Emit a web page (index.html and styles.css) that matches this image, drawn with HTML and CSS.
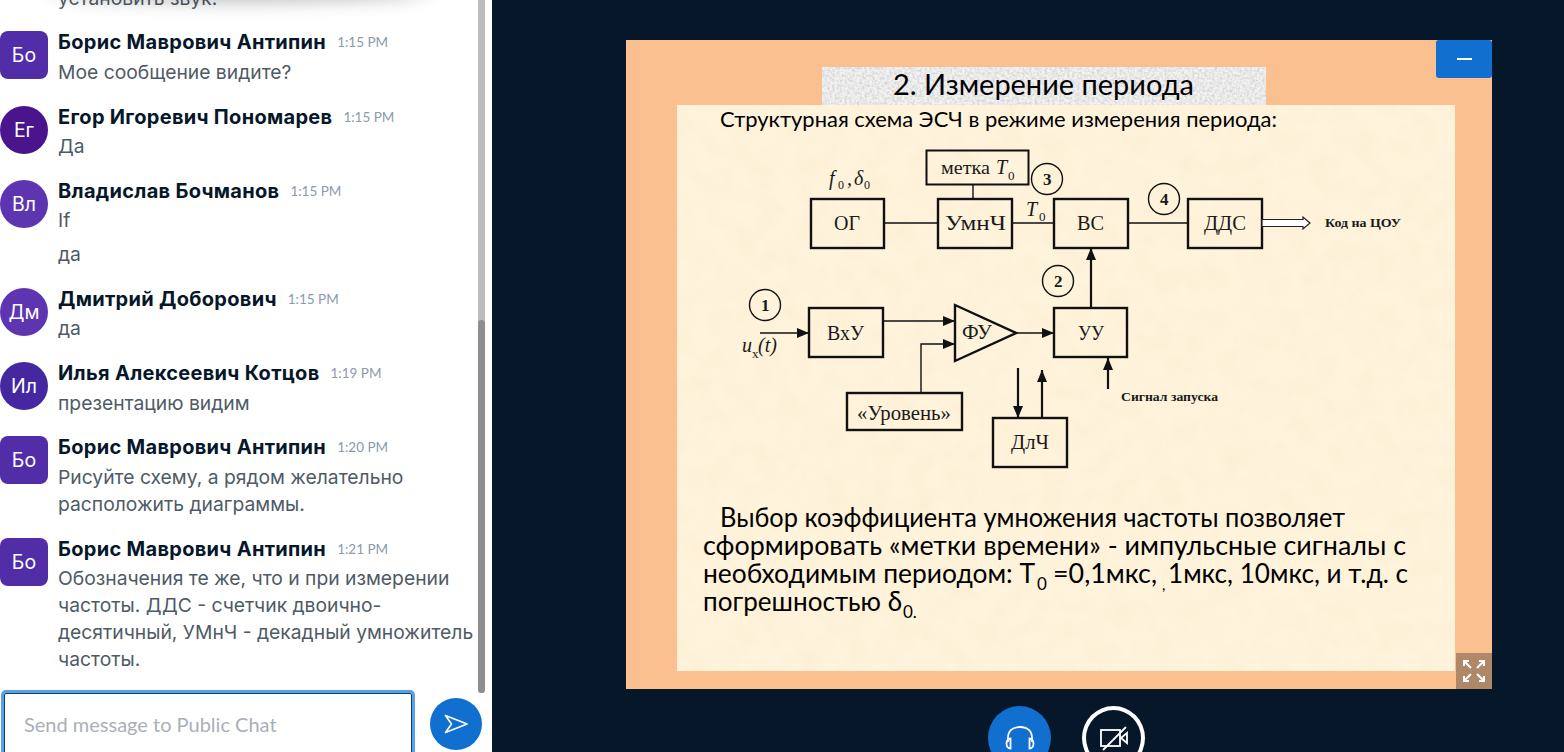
FILE: index.html
```html
<!DOCTYPE html>
<html>
<head>
    <meta charset="utf-8">
    <meta name="viewport" content="width=device-width, initial-scale=1">
    <title>Public Chat</title>
    <link rel="stylesheet" href="styles.css">
</head>
<body>
    <aside class="chat">
        <div class="chat-shadow"></div>
        <div class="scroll-track"><div class="scroll-thumb"></div></div>

        <div class="messages">
            <div class="row">
                <div class="avatar-space"></div>
                <div class="row-body">
                    <p class="msg">установить звук.</p>
                </div>
            </div>
            <div class="row">
                <div class="avatar av-boris">Бо</div>
                <div class="row-body">
                    <div class="row-head"><span class="name">Борис Маврович Антипин</span><span class="time">1:15 PM</span></div>
                    <p class="msg">Мое сообщение видите?</p>
                </div>
            </div>
            <div class="row">
                <div class="avatar round av-1">Ег</div>
                <div class="row-body">
                    <div class="row-head"><span class="name">Егор Игоревич Пономарев</span><span class="time">1:15 PM</span></div>
                    <p class="msg">Да</p>
                </div>
            </div>
            <div class="row">
                <div class="avatar round av-2">Вл</div>
                <div class="row-body">
                    <div class="row-head"><span class="name">Владислав Бочманов</span><span class="time">1:15 PM</span></div>
                    <p class="msg">If</p>
                    <p class="msg next">да</p>
                </div>
            </div>
            <div class="row">
                <div class="avatar round av-2">Дм</div>
                <div class="row-body">
                    <div class="row-head"><span class="name">Дмитрий Доборович</span><span class="time">1:15 PM</span></div>
                    <p class="msg">да</p>
                </div>
            </div>
            <div class="row">
                <div class="avatar round av-3">Ил</div>
                <div class="row-body">
                    <div class="row-head"><span class="name">Илья Алексеевич Котцов</span><span class="time">1:19 PM</span></div>
                    <p class="msg">презентацию видим</p>
                </div>
            </div>
            <div class="row">
                <div class="avatar av-boris">Бо</div>
                <div class="row-body">
                    <div class="row-head"><span class="name">Борис Маврович Антипин</span><span class="time">1:20 PM</span></div>
                    <p class="msg">Рисуйте схему, а рядом желательно расположить диаграммы.</p>
                </div>
            </div>
            <div class="row">
                <div class="avatar av-boris">Бо</div>
                <div class="row-body">
                    <div class="row-head"><span class="name">Борис Маврович Антипин</span><span class="time">1:21 PM</span></div>
                    <p class="msg">Обозначения те же, что и при измерении частоты. ДДС - счетчик двоично-<br>десятичный, УМнЧ - декадный умножитель частоты.</p>
                </div>
            </div>
        </div>

        <div class="composer">
            <div class="composer-input">Send message to Public Chat</div>
            <button class="send-btn" aria-label="Send">
                <svg width="24" height="20" viewBox="0 0 24 20" fill="none" stroke="#fff" stroke-width="1.6" stroke-linejoin="round">
                    <path d="M1.500 1.500 L23 10 L1.500 18.500 L7.500 10 Z"/>
                </svg>
            </button>
        </div>
    </aside>

    <main class="stage">
        <div class="slide">
            <svg class="slide-svg" width="866" height="649" viewBox="626 40 866 649">
                <defs>
                    <filter id="paper" x="0" y="0" width="100%" height="100%">
                        <feTurbulence type="fractalNoise" baseFrequency="0.045" numOctaves="3" seed="7"/>
                        <feColorMatrix type="matrix" values="0 0 0 0 0.95  0 0 0 0 0.84  0 0 0 0 0.62  0.9 0 0 0 -0.32"/>
                    </filter>
                    <filter id="grain" x="0" y="0" width="100%" height="100%">
                        <feTurbulence type="fractalNoise" baseFrequency="0.4" numOctaves="2" seed="3"/>
                        <feColorMatrix type="matrix" values="0 0 0 0 0.5  0 0 0 0 0.5  0 0 0 0 0.5  1.2 0 0 0 -0.42"/>
                    </filter>
                    <marker id="head" viewBox="0 0 12 10" refX="12" refY="5" markerUnits="userSpaceOnUse" markerWidth="12" markerHeight="10" orient="auto">
                        <path d="M0 0 L12 5 L0 10 Z" fill="#111"/>
                    </marker>
                </defs>

                <rect x="626" y="40" width="866" height="649" fill="#fbc08f"/>
                <rect x="822" y="67" width="444" height="38" fill="#f3f3f3"/>
                <rect x="822" y="67" width="444" height="38" filter="url(#grain)"/>
                <rect x="677" y="105" width="778" height="566" fill="#fff3dc"/>
                <rect x="677" y="105" width="778" height="566" filter="url(#paper)"/>

                <g class="slide-text">
                    <text x="893" y="95" font-size="29" textLength="301" lengthAdjust="spacingAndGlyphs">2. Измерение периода</text>
                    <text x="720" y="127" font-size="22" textLength="557" lengthAdjust="spacingAndGlyphs">Структурная схема ЭСЧ в режиме измерения периода:</text>
                    <text x="720" y="527" font-size="27" textLength="625" lengthAdjust="spacingAndGlyphs">Выбор коэффициента умножения  частоты позволяет</text>
                    <text x="703" y="555" font-size="27" textLength="703" lengthAdjust="spacingAndGlyphs">сформировать «метки времени» - импульсные сигналы с</text>
                    <text x="703" y="583" font-size="27" textLength="332" lengthAdjust="spacingAndGlyphs">необходимым периодом: Т</text>
                    <text x="1037" y="590" font-size="17">0</text>
                    <text x="1053" y="583" font-size="27" textLength="104" lengthAdjust="spacingAndGlyphs">=0,1мкс,</text>
                    <text x="1162" y="590" font-size="15">,</text>
                    <text x="1168" y="583" font-size="27" textLength="240" lengthAdjust="spacingAndGlyphs">1мкс, 10мкс, и т.д. с</text>
                    <text x="703" y="611" font-size="27" textLength="199" lengthAdjust="spacingAndGlyphs">погрешностью δ</text>
                    <text x="903" y="618" font-size="17">0.</text>
                </g>

                <g class="boxes" fill="none" stroke="#111" stroke-width="2.4">
                    <rect x="926.5" y="150.5" width="102" height="34" stroke-width="2"/>
                    <rect x="811" y="199" width="73" height="49"/>
                    <rect x="938" y="199" width="74" height="49"/>
                    <rect x="1054" y="199" width="74" height="49"/>
                    <rect x="1188" y="199" width="74" height="49"/>
                    <rect x="809" y="308" width="74" height="49"/>
                    <rect x="1054" y="308" width="73" height="49"/>
                    <rect x="847" y="393" width="115" height="37"/>
                    <rect x="993" y="418" width="74" height="49"/>
                    <path d="M955 305 L1016 333 L955 361 Z"/>
                </g>

                <g fill="none" stroke="#111" stroke-width="1.4">
                    <circle cx="1047" cy="179" r="15.5"/>
                    <circle cx="1058" cy="281" r="15.5"/>
                    <circle cx="765" cy="305" r="15.5"/>
                    <circle cx="1164" cy="199" r="15.5"/>
                    <path d="M973 184 V199 M884 223 H938 M1012 223 H1054 M1128 223 H1188"/>
                    <path d="M760 333 H809" marker-end="url(#head)"/>
                    <path d="M883 321 H955" marker-end="url(#head)"/>
                    <path d="M921 393 V344 H955" marker-end="url(#head)"/>
                    <path d="M1016 333 H1054" marker-end="url(#head)"/>
                </g>
                <g fill="none" stroke="#111" stroke-width="2.2">
                    <path d="M1018 368 V418" marker-end="url(#head)"/>
                    <path d="M1042 418 V370" marker-end="url(#head)"/>
                    <path d="M1108 389 V358" marker-end="url(#head)"/>
                    <path d="M1091 308 V248" marker-end="url(#head)"/>
                </g>
                <path d="M1262 219.500 H1303 V217 L1310 223 L1303 229 V226.500 H1262 Z" fill="#fff" stroke="#222" stroke-width="1.2"/>

                <g class="serif">
                    <text x="834" y="230" font-size="20" textLength="26" lengthAdjust="spacingAndGlyphs">ОГ</text>
                    <text x="945" y="230" font-size="20" textLength="61" lengthAdjust="spacingAndGlyphs">УмнЧ</text>
                    <text x="1077" y="230" font-size="20" textLength="27" lengthAdjust="spacingAndGlyphs">ВС</text>
                    <text x="1204" y="230" font-size="20" textLength="42" lengthAdjust="spacingAndGlyphs">ДДС</text>
                    <text x="827" y="340" font-size="20" textLength="37" lengthAdjust="spacingAndGlyphs">ВхУ</text>
                    <text x="962" y="339" font-size="20" textLength="30" lengthAdjust="spacingAndGlyphs">ФУ</text>
                    <text x="1078" y="340" font-size="20" textLength="26" lengthAdjust="spacingAndGlyphs">УУ</text>
                    <text x="857" y="420" font-size="20" textLength="94" lengthAdjust="spacingAndGlyphs">«Уровень»</text>
                    <text x="1011" y="449" font-size="20" textLength="38" lengthAdjust="spacingAndGlyphs">ДлЧ</text>
                    <text x="941" y="174" font-size="19" textLength="49" lengthAdjust="spacingAndGlyphs">метка</text>
                    <text x="996" y="174" font-size="20" font-style="italic">T</text>
                    <text x="1008" y="180" font-size="13">0</text>
                    <text x="1026" y="216" font-size="20" font-style="italic">T</text>
                    <text x="1039" y="221" font-size="13">0</text>
                    <text x="829" y="185" font-size="20" font-style="italic">f</text>
                    <text x="838" y="189" font-size="12">0</text>
                    <text x="847" y="185" font-size="20" font-style="italic">,</text>
                    <text x="854" y="185" font-size="20" font-style="italic">δ</text>
                    <text x="864" y="189" font-size="12">0</text>
                    <text x="742" y="352" font-size="20" font-style="italic">u</text>
                    <text x="752" y="358" font-size="13">x</text>
                    <text x="758" y="352" font-size="20" font-style="italic">(t)</text>
                    <g font-weight="700">
                        <text x="1043" y="185" font-size="17">3</text>
                        <text x="1054" y="287" font-size="17">2</text>
                        <text x="761" y="311" font-size="17">1</text>
                        <text x="1160" y="205" font-size="17">4</text>
                        <text x="1325" y="227" font-size="13" textLength="76" lengthAdjust="spacingAndGlyphs">Код на ЦОУ</text>
                        <text x="1121" y="401" font-size="13" textLength="97" lengthAdjust="spacingAndGlyphs">Сигнал запуска</text>
                    </g>
                </g>
            </svg>

            <button class="minimize-btn" aria-label="Minimize"><span class="dash"></span></button>
            <button class="expand-btn" aria-label="Fullscreen">
                <svg width="22" height="22" viewBox="0 0 22 22" fill="none" stroke="#fff" stroke-width="2">
                    <path d="M1 6 V1 H6 M1 1 L8 8"/>
                    <path d="M16 1 H21 V6 M21 1 L14 8"/>
                    <path d="M1 16 V21 H6 M1 21 L8 14"/>
                    <path d="M16 21 H21 V16 M21 21 L14 14"/>
                </svg>
            </button>
        </div>

        <div class="controls">
            <button class="ctl ctl-audio" aria-label="Audio">
                <svg width="30" height="26" viewBox="0 0 30 26" fill="none" stroke="#fff" stroke-width="1.8">
                    <path d="M3 17 V13 C3 5.500 8 2 15 2 C22 2 27 5.500 27 13 V17"/>
                    <path d="M5.500 13.500 V23.500 C3 23.500 1.500 21 1.500 18.500 C1.500 16 3 13.500 5.500 13.500 Z"/>
                    <path d="M24.500 13.500 V23.500 C27 23.500 28.500 21 28.500 18.500 C28.500 16 27 13.500 24.500 13.500 Z"/>
                </svg>
            </button>
            <button class="ctl ctl-video" aria-label="Video off">
                <svg width="30" height="26" viewBox="0 0 30 26" fill="none" stroke="#fff" stroke-width="1.8">
                    <rect x="2" y="5" width="19" height="16"/>
                    <path d="M28 8 L22 13 L28 18 Z"/>
                    <path d="M4 25 L27 2"/>
                </svg>
            </button>
        </div>
    </main>
</body>
</html>
```

FILE: styles.css
```css
* {
    box-sizing: border-box;
}

html, body {
    height: 100%;
}

body {
    margin: 0;
    display: flex;
    height: 752px;
    overflow: hidden;
    background-color: #06172a;
    font-family: Inter, "Noto Sans", sans-serif;
}

button {
    padding: 0;
    border: none;
    cursor: pointer;
}

/* chat column */
.chat {
    position: relative;
    flex: 0 0 492px;
    display: flex;
    flex-direction: column;
    height: 752px;
    overflow: hidden;
    background-color: #fff;
}

.chat-shadow {
    position: absolute;
    top: -26px;
    left: 50px;
    width: 380px;
    height: 24px;
    border-radius: 50%;
    box-shadow: 0 4px 18px rgba(0,0,0,0.26);
    z-index: 2;
}

.scroll-track {
    position: absolute;
    top: 0;
    left: 478px;
    width: 7px;
    height: 693px;
    border-radius: 0 0 4px 4px;
    background-color: #bcbcbc;
    z-index: 2;
}

.scroll-thumb {
    position: absolute;
    top: 320px;
    left: 0;
    right: 0;
    bottom: 0;
    border-radius: 4px;
    background-color: #8e8e8e;
}

.messages {
    flex: 1;
    min-height: 0;
    display: flex;
    flex-direction: column;
    justify-content: flex-end;
    overflow: hidden;
    padding-bottom: 17px;
}

.row {
    display: flex;
    flex-shrink: 0;
    gap: 10px;
    padding-right: 12px;
}

.row + .row {
    margin-top: 19.8px;
}

.avatar,
.avatar-space {
    flex: 0 0 48px;
}

.avatar {
    height: 48px;
    display: flex;
    align-items: center;
    justify-content: center;
    border-radius: 8px;
    color: #fff;
    font-size: 19.5px;
}

.avatar.round {
    border-radius: 50%;
}

.av-boris { background-color: #512da8; }
.av-1 { background-color: #4a148c; }
.av-2 { background-color: #5e35b1; }
.av-3 { background-color: #4527a0; }

.row-body {
    flex: 1;
    min-width: 0;
}

.row-head {
    display: flex;
    align-items: center;
    gap: 11px;
    height: 22px;
    line-height: 22px;
    margin-bottom: 5.4px;
}

.name {
    color: #06172a;
    font-size: 20px;
    font-weight: 700;
    letter-spacing: 0.3px;
    white-space: nowrap;
}

.time {
    color: #8b9aac;
    font-family: Lato, sans-serif;
    font-size: 13.5px;
}

.msg {
    margin: 0;
    color: #4e5a66;
    font-size: 19.3px;
    line-height: 27px;
}

.msg.next {
    margin-top: 7px;
}

.composer {
    flex: 0 0 62px;
    display: flex;
    gap: 18px;
    padding-left: 4px;
    overflow: hidden;
}

.composer-input {
    flex: 0 0 408px;
    height: 80px;
    margin-top: 3px;
    padding: 17px 0 0 19px;
    border: 1px solid #123e6b;
    border-radius: 2px;
    box-shadow: 0 0 0 3px #5a9fee;
    color: #a9b0b8;
    font-family: Lato, sans-serif;
    font-size: 20px;
    line-height: 26px;
}

.send-btn {
    flex: 0 0 52px;
    height: 52px;
    margin-top: 8px;
    display: flex;
    align-items: center;
    justify-content: center;
    border-radius: 50%;
    background-color: #1170cf;
}

/* presentation side */
.stage {
    flex: 1;
    padding: 40px 0 0 134px;
}

.slide {
    position: relative;
    width: 866px;
    height: 649px;
}

.slide-svg {
    display: block;
}

.slide-text text {
    fill: #000;
    font-family: Lato, "Open Sans", sans-serif;
}

.serif text {
    fill: #1a1a1a;
    font-family: "Liberation Serif", serif;
}

.minimize-btn {
    position: absolute;
    top: 0;
    right: 0;
    width: 56px;
    height: 38px;
    display: flex;
    align-items: center;
    justify-content: center;
    border-radius: 3px;
    background-color: #1170cf;
}

.dash {
    width: 15px;
    height: 2px;
    background-color: #fff;
}

.expand-btn {
    position: absolute;
    right: 0;
    bottom: 0;
    width: 36px;
    height: 36px;
    display: flex;
    align-items: center;
    justify-content: center;
    background-color: #ae8868;
}

.controls {
    display: flex;
    gap: 31px;
    margin: 17px 0 0 362px;
}

.ctl {
    flex: 0 0 63px;
    height: 64px;
    display: flex;
    align-items: center;
    justify-content: center;
    border-radius: 50%;
}

.ctl-audio {
    background-color: #1170cf;
}

.ctl-video {
    border: 4px solid #fff;
    background-color: transparent;
}
```
